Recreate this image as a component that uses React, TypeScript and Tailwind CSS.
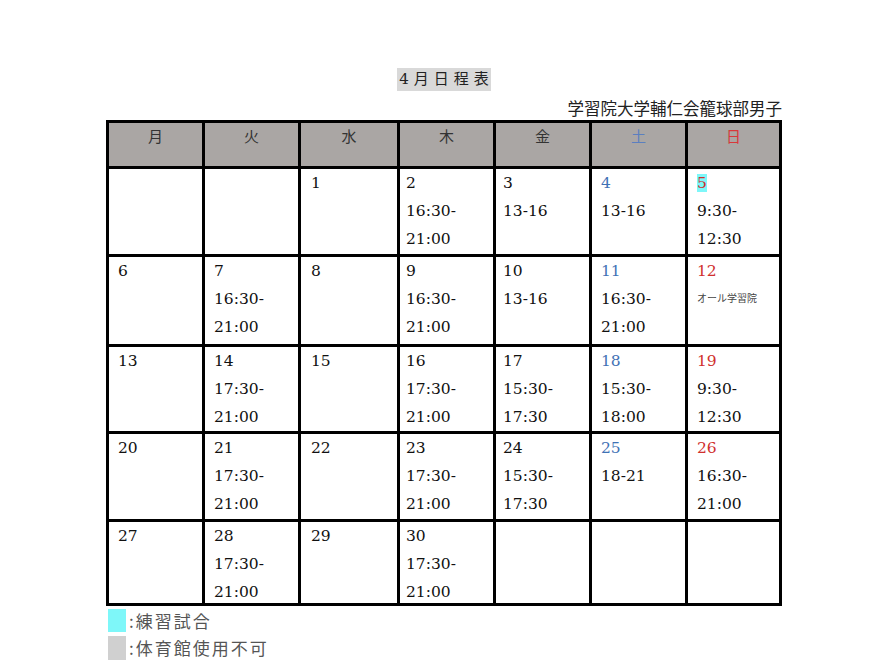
import React from 'react'

type Cell = {
  day?: number
  lines?: string[]
  note?: string
  highlight?: boolean
}

const heads = [
  { label: '月', color: 'text-[#333]' },
  { label: '火', color: 'text-[#333]' },
  { label: '水', color: 'text-[#333]' },
  { label: '木', color: 'text-[#333]' },
  { label: '金', color: 'text-[#333]' },
  { label: '土', color: 'text-[#5b7fc0]' },
  { label: '日', color: 'text-[#d9383a]' },
]

const weeks: { h: string; cells: Cell[] }[] = [
  {
    h: 'h-[85px]',
    cells: [
      {},
      {},
      { day: 1 },
      { day: 2, lines: ['16:30-', '21:00'] },
      { day: 3, lines: ['13-16'] },
      { day: 4, lines: ['13-16'] },
      { day: 5, lines: ['9:30-', '12:30'], highlight: true },
    ],
  },
  {
    h: 'h-[87px]',
    cells: [
      { day: 6 },
      { day: 7, lines: ['16:30-', '21:00'] },
      { day: 8 },
      { day: 9, lines: ['16:30-', '21:00'] },
      { day: 10, lines: ['13-16'] },
      { day: 11, lines: ['16:30-', '21:00'] },
      { day: 12, note: 'オール学習院' },
    ],
  },
  {
    h: 'h-[84px]',
    cells: [
      { day: 13 },
      { day: 14, lines: ['17:30-', '21:00'] },
      { day: 15 },
      { day: 16, lines: ['17:30-', '21:00'] },
      { day: 17, lines: ['15:30-', '17:30'] },
      { day: 18, lines: ['15:30-', '18:00'] },
      { day: 19, lines: ['9:30-', '12:30'] },
    ],
  },
  {
    h: 'h-[85px]',
    cells: [
      { day: 20 },
      { day: 21, lines: ['17:30-', '21:00'] },
      { day: 22 },
      { day: 23, lines: ['17:30-', '21:00'] },
      { day: 24, lines: ['15:30-', '17:30'] },
      { day: 25, lines: ['18-21'] },
      { day: 26, lines: ['16:30-', '21:00'] },
    ],
  },
  {
    h: 'h-[81px]',
    cells: [
      { day: 27 },
      { day: 28, lines: ['17:30-', '21:00'] },
      { day: 29 },
      { day: 30, lines: ['17:30-', '21:00'] },
      {},
      {},
      {},
    ],
  },
]

const serif = "font-['DejaVu_Serif','Noto_Sans_CJK_JP',serif]"
const jp = "font-['Noto_Sans_CJK_JP',sans-serif]"

// column-specific left padding, the source document isn't perfectly even
const pads = ['pl-[9px]', 'pl-[9px]', 'pl-[10px]', 'pl-[6px]', 'pl-[7px]', 'pl-[9px]', 'pl-[9px]']

function dayColor(col: number) {
  if (col === 5) return 'text-[#3f72b5]'
  if (col === 6) return 'text-[#d0302e]'
  return 'text-[#111]'
}

export default function App() {
  return (
    <div className="w-[889px] h-[672px] bg-white overflow-hidden">
      <div className="ml-[106px] w-[676px] pt-[68px]">
        <div className="flex justify-center">
          <div className={`${serif} flex h-[23px] items-center gap-[5px] bg-[#d9d9d9] px-[2px] text-[15px] leading-[23px] text-[#222]`}>
            <span>4</span>
            <span>月</span>
            <span>日</span>
            <span>程</span>
            <span>表</span>
          </div>
        </div>
        <div className={`${jp} mt-[6px] text-right text-[16.5px] leading-[22px] text-[#222]`}>学習院大学輔仁会籠球部男子</div>

        <div className="mt-[1px] grid grid-cols-[93px_93px_96px_93px_93px_93px_91px] gap-[3px] bg-black p-[3px]">
          {heads.map((h) => (
            <div key={h.label} className={`${jp} h-[43px] bg-[#aaa6a4] text-center text-[15px] leading-[26px] ${h.color}`}>
              {h.label}
            </div>
          ))}
          {weeks.map((w, wi) =>
            w.cells.map((c, ci) => (
              <div key={`${wi}-${ci}`} className={`${w.h} bg-white ${pads[ci]} ${serif} text-[15.5px] leading-[28px] text-[#111]`}>
                {c.day !== undefined && (
                  <div>
                    <span className={`${dayColor(ci)} ${c.highlight ? 'bg-[#7ef7f9] text-[#444]' : ''}`}>{c.day}</span>
                  </div>
                )}
                {c.lines?.map((l) => (
                  <div key={l}>{l}</div>
                ))}
                {c.note && <div className={`${jp} text-[10px] leading-[26px] text-[#444]`}>{c.note}</div>}
              </div>
            ))
          )}
        </div>

        <div className={`${jp} mt-[3px] flex flex-col gap-[4px] text-[17px] tracking-[2px] text-[#555]`}>
          <div className="flex items-center">
            <div className="ml-[2px] w-[18px] h-[23px] bg-[#7ef7f9]" />
            <span className="ml-[3px] leading-[23px]">:練習試合</span>
          </div>
          <div className="flex items-center">
            <div className="ml-[2px] w-[18px] h-[24px] bg-[#d0d0d0]" />
            <span className="ml-[3px] leading-[24px]">:体育館使用不可</span>
          </div>
        </div>
      </div>
    </div>
  )
}
